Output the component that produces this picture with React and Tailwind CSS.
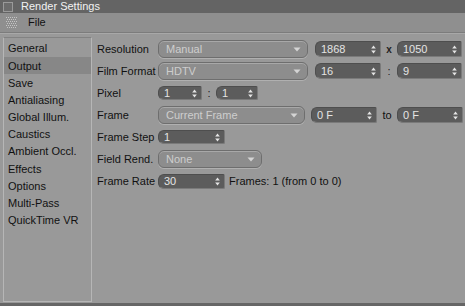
import React from "react"

const tabs = [
  "General",
  "Output",
  "Save",
  "Antialiasing",
  "Global Illum.",
  "Caustics",
  "Ambient Occl.",
  "Effects",
  "Options",
  "Multi-Pass",
  "QuickTime VR",
]

function Spin() {
  return (
    <svg width="5" height="9" viewBox="0 0 5 9" className="shrink-0">
      <path d="M2.5 0.5 L4.8 3.6 L0.2 3.6 Z" fill="#e6e6e6" />
      <path d="M2.5 8.5 L4.8 5.4 L0.2 5.4 Z" fill="#e6e6e6" />
    </svg>
  )
}

function NumField({ value, w, h = "h-[16px]" }) {
  return (
    <div
      className={`${w} ${h} flex items-center justify-between pl-[5px] pr-[4px] rounded-l-[6px] rounded-r-[2px] bg-[#5c5c5c] border border-[#4e4e4e] border-b-[#7a7a7a] border-r-[#7a7a7a] text-[#e4e4e4] shrink-0`}
    >
      <span className="leading-none">{value}</span>
      <Spin />
    </div>
  )
}

function Drop({ value, w }) {
  return (
    <div
      className={`${w} h-[18px] flex items-center justify-between pl-[7px] pr-[6px] rounded-[6px] bg-[#8d8d8d] border border-[#6e6e6e] shadow-[inset_0_1px_0_#a8a8a8,0_1px_0_#b0b0b0] text-[#cdcdcd] shrink-0`}
    >
      <span className="leading-none">{value}</span>
      <svg width="8" height="5" viewBox="0 0 8 5">
        <path d="M0.5 0.5 L7.5 0.5 L4 4.5 Z" fill="#d4d4d4" />
      </svg>
    </div>
  )
}

function Row({ label, children }) {
  return (
    <div className="h-[22px] flex items-center">
      <span className="w-[61px] shrink-0 text-[#111]">{label}</span>
      <div className="flex items-center">{children}</div>
    </div>
  )
}

export default function App() {
  return (
    <div
      className="w-[465px] h-[306px] bg-[#999999] overflow-hidden flex flex-col text-[11px] text-[#111]"
      style={{ fontFamily: '"Liberation Sans", Arial, sans-serif' }}
    >
      {/* title bar */}
      <div className="h-[13px] bg-[#646464] flex items-center shrink-0">
        <div className="ml-[3px] w-[10px] h-[10px] border border-[#9a9a9a] bg-[#6c6c6c]" />
        <span className="ml-[8px] text-[#f2f2f2] text-[11px] leading-none">Render Settings</span>
      </div>

      {/* menu */}
      <div className="h-[20px] bg-[#8f8f8f] flex items-center shrink-0 border-b border-[#7c7c7c]">
        <svg width="11" height="11" viewBox="0 0 11 11" className="ml-[6px]">
          {[0, 2, 4, 6, 8, 10].map((y) =>
            [0, 2, 4, 6, 8, 10].map((x) => (
              <rect key={`${x}-${y}`} x={x + ((y / 2) % 2)} y={y} width="1" height="1" fill="#c4c4c4" />
            ))
          )}
        </svg>
        <span className="ml-[11px] text-[#111]">File</span>
      </div>
      <div className="h-px bg-[#a8a8a8] shrink-0" />

      <div className="flex flex-1 pt-[3px]">
        {/* tab list */}
        <div className="ml-[3px] w-[89px] mb-[1px] border border-[#b6b6b6] border-t-[#828282] pt-[2px] shrink-0">
          {tabs.map((t) => (
            <div
              key={t}
              className={`h-[17.2px] flex items-center pl-[4px] ${t === "Output" ? "bg-[#878787]" : ""}`}
            >
              {t}
            </div>
          ))}
        </div>

        {/* form */}
        <div className="ml-[5px] flex flex-col pt-px">
          <Row label="Resolution">
            <Drop value="Manual" w="w-[150px]" />
            <div className="ml-[7px]"><NumField value="1868" w="w-[66px]" /></div>
            <span className="w-[16px] text-center text-[10px] font-bold text-[#222]">x</span>
            <NumField value="1050" w="w-[65px]" />
          </Row>
          <Row label="Film Format">
            <Drop value="HDTV" w="w-[150px]" />
            <div className="ml-[7px]"><NumField value="16" w="w-[66px]" /></div>
            <span className="w-[16px] text-center text-[#222]">:</span>
            <NumField value="9" w="w-[65px]" />
          </Row>
          <Row label="Pixel">
            <NumField value="1" w="w-[44px]" h="h-[14px]" />
            <span className="w-[14px] text-center text-[#222]">:</span>
            <NumField value="1" w="w-[42px]" h="h-[14px]" />
          </Row>
          <Row label="Frame">
            <Drop value="Current Frame" w="w-[147px]" />
            <div className="ml-[6px]"><NumField value="0 F" w="w-[66px]" /></div>
            <span className="w-[20px] text-center">to</span>
            <NumField value="0 F" w="w-[66px]" />
          </Row>
          <Row label="Frame Step">
            <NumField value="1" w="w-[67px]" h="h-[14px]" />
          </Row>
          <Row label="Field Rend.">
            <Drop value="None" w="w-[104px]" />
          </Row>
          <Row label="Frame Rate">
            <NumField value="30" w="w-[67px]" h="h-[15px]" />
            <span className="ml-[4px]">Frames: 1 (from 0 to 0)</span>
          </Row>
        </div>
      </div>
      <div className="h-[3px] bg-[#666666] shrink-0" />
    </div>
  )
}
